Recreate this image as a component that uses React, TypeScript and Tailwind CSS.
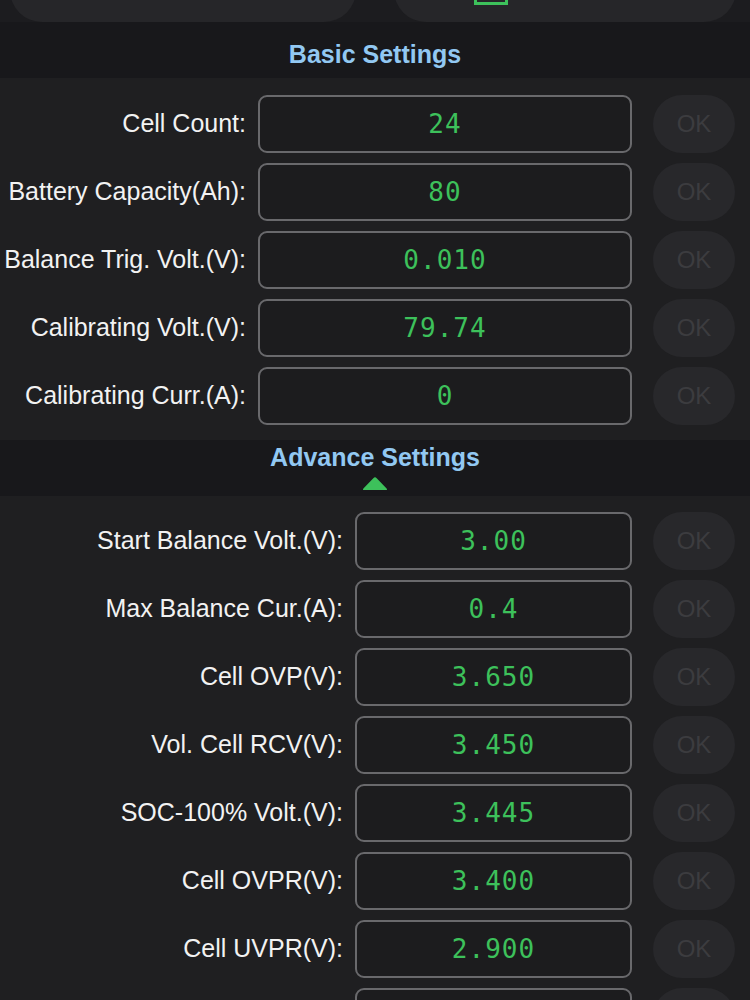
import React from 'react';

type Field = { label: string; value: string };

const basicFields: Field[] = [
  { label: 'Cell Count:', value: '24' },
  { label: 'Battery Capacity(Ah):', value: '80' },
  { label: 'Balance Trig. Volt.(V):', value: '0.010' },
  { label: 'Calibrating Volt.(V):', value: '79.74' },
  { label: 'Calibrating Curr.(A):', value: '0' },
];

const advanceFields: Field[] = [
  { label: 'Start Balance Volt.(V):', value: '3.00' },
  { label: 'Max Balance Cur.(A):', value: '0.4' },
  { label: 'Cell OVP(V):', value: '3.650' },
  { label: 'Vol. Cell RCV(V):', value: '3.450' },
  { label: 'SOC-100% Volt.(V):', value: '3.445' },
  { label: 'Cell OVPR(V):', value: '3.400' },
  { label: 'Cell UVPR(V):', value: '2.900' },
  { label: 'Cell UVP(V):', value: '2.600' },
];

const SettingRow: React.FC<{ field: Field; labelWidth: string; inputWidth: string }> = ({
  field,
  labelWidth,
  inputWidth,
}) => (
  <div className="flex items-center h-[58px]">
    <div className={`${labelWidth} shrink-0 text-right text-[25px] text-[#f2f2f2] whitespace-nowrap`}>
      {field.label}
    </div>
    <div
      className={`${inputWidth} shrink-0 ml-[12px] h-[58px] rounded-[9px] border-2 border-[#69696c] bg-[#1c1c1e] flex items-center justify-center`}
    >
      <span className="font-['DejaVu_Sans_Mono',monospace] text-[26px] tracking-[1px] text-[#3dc15b]">
        {field.value}
      </span>
    </div>
    <button className="ml-[21px] w-[82px] h-[58px] shrink-0 rounded-[29px] bg-[#28282b] text-[24px] text-[#3c3c3f]">
      OK
    </button>
  </div>
);

export default function App() {
  return (
    <div className="w-[750px] h-[1000px] overflow-hidden bg-[#1f1f21] font-['Liberation_Sans',Arial,sans-serif]">
      {/* device cards, mostly scrolled off the top */}
      <div className="h-[22px] overflow-hidden bg-[#1c1c1f] flex items-end px-[10px] gap-[38px]">
        <div className="w-[346px] h-[80px] shrink-0 rounded-b-[32px] bg-[#262629]" />
        <div className="w-[342px] h-[80px] shrink-0 rounded-b-[32px] bg-[#262629] flex justify-start items-end pl-[80px] pb-[17px]">
          <div className="w-[34px] h-[40px] border-[3px] border-[#3dc15b]" />
        </div>
      </div>

      <div className="h-[56px] bg-[#18181b] flex justify-center pt-[18px]">
        <h2 className="text-[25px] font-bold text-[#92c8f2] leading-[28px]">Basic Settings</h2>
      </div>

      <div className="flex flex-col gap-[10px] pt-[17px] pb-[15px]">
        {basicFields.map((f) => (
          <SettingRow key={f.label} field={f} labelWidth="w-[246px]" inputWidth="w-[374px]" />
        ))}
      </div>

      <div className="h-[56px] bg-[#18181b] flex flex-col items-center pt-[3px]">
        <h2 className="text-[25px] font-bold text-[#92c8f2] leading-[28px]">Advance Settings</h2>
        <svg width="28" height="15" viewBox="0 0 28 15" className="mt-[5px]">
          <path d="M12.3 2.2 Q14 0.4 15.7 2.2 L25.6 12.4 Q26.8 14 24.8 14 L3.2 14 Q1.2 14 2.4 12.4 Z" fill="#3dc15b" />
        </svg>
      </div>

      <div className="flex flex-col gap-[10px] pt-[16px]">
        {advanceFields.map((f) => (
          <SettingRow key={f.label} field={f} labelWidth="w-[343px]" inputWidth="w-[277px]" />
        ))}
      </div>
    </div>
  );
}
